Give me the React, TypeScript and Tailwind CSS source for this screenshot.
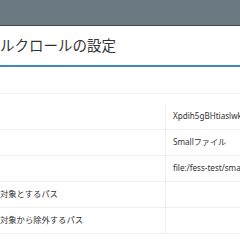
import React from "react";

const rows: [string, string][] = [
  ["", "Xpdih5gBHtiaslwk"],
  ["", "Smallファイル"],
  ["", "file:/fess-test/small"],
  ["対象とするパス", ""],
  ["対象から除外するパス", ""],
];

export default function App() {
  return (
    <div
      className="w-[240px] h-[240px] overflow-hidden bg-white text-[#333]"
      style={{ fontFamily: '"Noto Sans", "Noto Sans CJK JP", sans-serif' }}
    >
      <div className="h-[26px] bg-[#6c7a83] border-b border-[#454545]" />
      <div className="h-[39px] flex items-center text-[14.5px] leading-none whitespace-nowrap pb-[1px]">
        ルクロールの設定
      </div>
      <div className="h-[2px] bg-[#3c8dbc]" />
      <div className="h-[27px] border-b border-[#f0f0f0]" />
      <div className="h-[10px]" />
      <div className="flex flex-col">
        {rows.map(([l, v], i) => (
          <div key={i} className="grid grid-cols-[166px_1fr] h-[26px] border-b border-[#eeeeee]">
            <div className="flex items-center border-r border-[#eeeeee] text-[8.3px] whitespace-nowrap">
              {l}
            </div>
            <div className="flex items-center pl-[7px] text-[8.1px] whitespace-nowrap overflow-hidden">
              {v}
            </div>
          </div>
        ))}
      </div>
    </div>
  );
}
